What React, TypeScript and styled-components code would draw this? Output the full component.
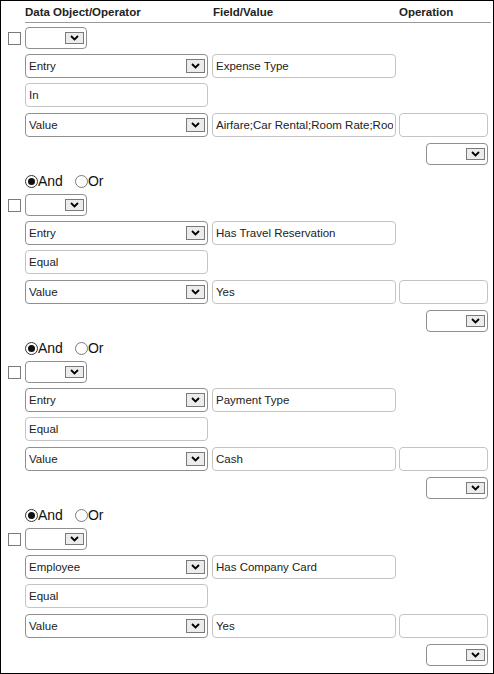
import React from "react";
import styled, { createGlobalStyle } from "styled-components";

const GlobalStyle = createGlobalStyle`
  html, body { margin: 0; padding: 0; background: #fff; }
  body { font-family: "Liberation Sans", Arial, sans-serif; color: #222; }
  * { box-sizing: border-box; }
`;

const Panel = styled.div`
  width: 494px;
  height: 674px;
  border: 1px solid #000;
  background: #fff;
  overflow: hidden;
`;

const HeaderRow = styled.div`
  display: grid;
  grid-template-columns: 188px 186px 1fr;
  margin: 0 2px 0 24px;
  height: 22px;
  padding-top: 4px;
  border-bottom: 1px solid #9a9a9a;
  font-weight: bold;
  font-size: 11.5px;
  line-height: 14px;
  color: #222;
`;

const List = styled.div`
  padding-top: 4px;
`;

const Block = styled.div`
  display: flex;
  flex-direction: column;
  margin-bottom: 5px;
`;

const Row = styled.div<{ $mt: number; $h: number }>`
  display: grid;
  grid-template-columns: 24px 187px 187px 89px;
  align-items: center;
  margin-top: ${(p) => p.$mt}px;
  height: ${(p) => p.$h}px;
`;

const CheckCell = styled.div`
  padding-left: 7px;
  display: flex;
  align-items: center;
`;

const CheckBox = styled.span`
  display: block;
  width: 13px;
  height: 13px;
  border: 1px solid #7b7b7b;
  background: #fff;
`;

const SelectBox = styled.div<{ $w: number; $h: number; $col?: number }>`
  grid-column: ${(p) => p.$col ?? "auto"};
  width: ${(p) => p.$w}px;
  height: ${(p) => p.$h}px;
  border: 1px solid #8f8f8f;
  border-radius: 4px;
  background: #fff;
  display: flex;
  align-items: center;
  justify-content: space-between;
  padding: 0 2px 0 3px;
  font-size: 11.5px;
  color: #222;
  justify-self: ${(p) => (p.$col === 4 ? "end" : "start")};
`;

const ChevronButton = styled.span<{ $h: number }>`
  width: 19px;
  height: ${(p) => p.$h}px;
  border: 1px solid #7a7a7a;
  background: #ececec;
  display: flex;
  align-items: center;
  justify-content: center;
`;

const TextField = styled.input<{ $w: number; $col?: number }>`
  grid-column: ${(p) => p.$col ?? "auto"};
  width: ${(p) => p.$w}px;
  height: 24px;
  border: 1px solid #c4c4c4;
  border-radius: 4px;
  padding: 0 2px 0 3px;
  margin: 0;
  font-family: "Liberation Sans", Arial, sans-serif;
  font-size: 11.5px;
  color: #222;
  background: #fff;
  outline: none;
`;

const RadioRow = styled.div`
  display: flex;
  align-items: center;
  height: 16px;
  margin-top: 8px;
  padding-left: 24px;
  gap: 12px;
  font-size: 14px;
  color: #111;
`;

const RadioLabel = styled.label`
  display: flex;
  align-items: center;
`;

const RadioDot = styled.span<{ $on: boolean }>`
  width: 13px;
  height: 13px;
  border-radius: 50%;
  border: 1px solid ${(p) => (p.$on ? "#333" : "#7b7b7b")};
  background: #fff;
  display: flex;
  align-items: center;
  justify-content: center;
  &::after {
    content: "";
    width: 7px;
    height: 7px;
    border-radius: 50%;
    background: ${(p) => (p.$on ? "#111" : "transparent")};
  }
`;

const Chevron = () => (
  <svg width="9" height="6" viewBox="0 0 9 6">
    <polyline points="1,1 4.5,4.5 8,1" fill="none" stroke="#000" strokeWidth="1.8" />
  </svg>
);

const Select = ({ w, h, col, text }: { w: number; h: number; col?: number; text?: string }) => (
  <SelectBox $w={w} $h={h} $col={col}>
    <span>{text ?? ""}</span>
    <ChevronButton $h={h === 22 ? 12 : 14}>
      <Chevron />
    </ChevronButton>
  </SelectBox>
);

type Cond = { obj: string; op: string; field: string; value: string };

const conds: Cond[] = [
  { obj: "Entry", op: "In", field: "Expense Type", value: "Airfare;Car Rental;Room Rate;Room Tax" },
  { obj: "Entry", op: "Equal", field: "Has Travel Reservation", value: "Yes" },
  { obj: "Entry", op: "Equal", field: "Payment Type", value: "Cash" },
  { obj: "Employee", op: "Equal", field: "Has Company Card", value: "Yes" },
];

export default function App() {
  return (
    <>
      <GlobalStyle />
      <Panel>
        <HeaderRow>
          <span>Data Object/Operator</span>
          <span>Field/Value</span>
          <span>Operation</span>
        </HeaderRow>
        <List>
          {conds.map((c, i) => (
            <Block key={i}>
              <Row $mt={0} $h={22}>
                <CheckCell>
                  <CheckBox />
                </CheckCell>
                <Select w={62} h={22} />
              </Row>
              <Row $mt={5} $h={24}>
                <Select w={183} h={24} col={2} text={c.obj} />
                <TextField $w={184} readOnly value={c.field} />
              </Row>
              <Row $mt={5} $h={24}>
                <TextField $w={183} $col={2} readOnly value={c.op} />
              </Row>
              <Row $mt={6} $h={24}>
                <Select w={183} h={24} col={2} text="Value" />
                <TextField $w={184} readOnly value={c.value} />
                <TextField $w={89} readOnly value="" />
              </Row>
              <Row $mt={6} $h={22}>
                <Select w={62} h={22} col={4} />
              </Row>
              {i < conds.length - 1 && (
                <RadioRow>
                  <RadioLabel>
                    <RadioDot $on={true} />
                    And
                  </RadioLabel>
                  <RadioLabel>
                    <RadioDot $on={false} />
                    Or
                  </RadioLabel>
                </RadioRow>
              )}
            </Block>
          ))}
        </List>
      </Panel>
    </>
  );
}
